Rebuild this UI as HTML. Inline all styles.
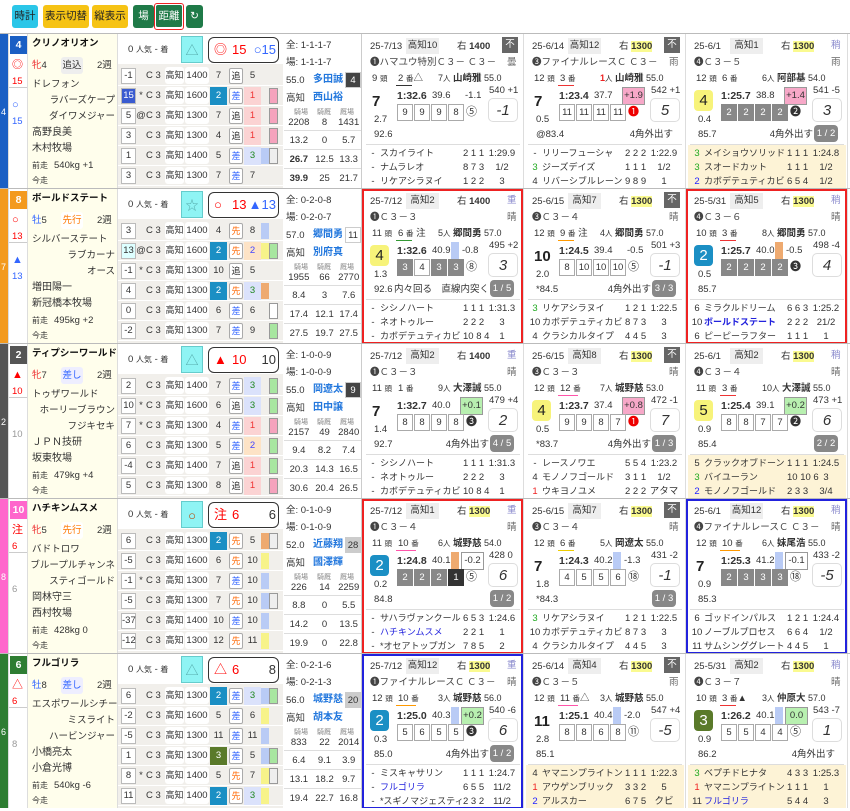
<!DOCTYPE html><html><head><meta charset="utf-8"><style>
*{box-sizing:border-box;margin:0;padding:0}
body{width:850px;height:811px;overflow:hidden;background:#fff;font-family:"Liberation Sans","Noto Sans CJK JP",sans-serif;font-size:9.5px;color:#333;position:relative}
i{position:absolute;font-style:normal;white-space:nowrap;line-height:1;display:block}
b{font-weight:bold}
.btn{position:absolute;top:5px;height:23px;border-radius:3px;font-size:10.5px;line-height:23px;text-align:center;color:#222}
.row{position:absolute;left:0;width:850px;height:155px;border-top:1px solid #bbb;overflow:hidden}
.col{position:absolute;top:0;height:155px;overflow:hidden}
.strip{left:0;width:8px}
.strip i{left:1px;top:74px;color:#fff;font-size:9px}
.nb{left:8px;width:19px;border-left:1px solid #ddd}
.nb .no{left:1px;top:2px;width:17px;height:18px;line-height:18px;text-align:center;color:#fff;font-weight:bold;font-size:10.5px}
.nb .m1{left:3px;top:26px;font-size:11px}.nb .m2{left:3px;top:43px}
.nb .ln{left:0;top:53px;width:18px;height:1px;background:#ccc}
.nb .m3{left:3px;top:66px;font-size:11px}.nb .m4{left:3px;top:83px}
.nb .gy{left:3px;top:86px;color:#999}
.nm{left:27px;width:91px;background:#fffeec;border-left:1px solid #ddd;border-right:1px solid #ddd}
.n1{left:4px;top:5px;font-weight:bold;font-size:9.5px;color:#111}
.n2{left:4px;top:27px}.n3{left:33px;top:23px;width:22px;height:17px;line-height:17px;text-align:center;border-radius:3px}
.n4{left:69px;top:27px}.n5{left:4px;top:46px}.n6{right:2px;top:62px}.n7{right:2px;top:78px}
.n8{left:4px;top:94px;font-size:10px}.n9{left:4px;top:110px;font-size:10px}
.n10{left:4px;top:128px;font-size:8px}.n11{left:26px;top:127px}.n12{left:4px;top:143px;font-size:8px}
.fm{left:118px;width:165px;background:#f1efeb}
.fm .hd{left:0;top:0;width:165px;height:30px;background:#fff}
.fm .h1{left:10px;top:11px}
.fm .cb{left:63px;top:2px;width:22px;height:27px;line-height:27px;text-align:center;background:#8ff4f4;border:1px solid #6cc;font-size:13px}
.fm .ov{left:90px;top:3px;width:71px;height:26px;border:1.5px solid #333;border-radius:6px;background:#fff}
.ov i{top:5px;font-size:13px}
.fr{position:absolute;left:0;width:165px;height:20px;display:flex;align-items:center;border-bottom:1px solid #fff;white-space:nowrap;overflow:hidden}
.fr span{display:block;flex:none}
.fr .d{margin-left:3px;width:15px;height:16px;border:1px solid #bbb;background:#fff;font-size:9.5px;text-align:center;line-height:14px}
.fr .p{width:10px;text-align:center}
.fr .c{width:19px}
.fr .v{width:19px;height:17px;background:#fff;border-radius:3px;text-align:center;line-height:17px;font-size:9px}
.fr .s{width:24px;margin-left:1px;height:17px;background:#fff;border-radius:3px;text-align:center;line-height:17px}
.fr .o{width:17px;margin-left:1px;height:18px;line-height:18px;text-align:center}
.fr .y{width:14px;height:16px;margin-left:2px;border:1px solid #aaa;border-radius:2px;background:#fff;text-align:center;line-height:14px;font-size:9px}
.fr .k{width:17px;margin-left:1px;height:18px;line-height:18px;text-align:center}
.fr .b1{width:8px;height:16px}.fr .b2{width:9px;height:16px;border:1px solid #999}
.bl{background:#1b8fc4;color:#fff}.ol{background:#5a7a2a;color:#fff}
.tu{background:#e2e2e2}.sa{color:#36f}.se{color:#f60}
.r1{background:#fbd3d3;color:#e33}.r2{background:#fde3c6;color:#44f}.r3{background:#dbe2fb;color:#282}
.cpk{background:#f5a3bd}.cgr{background:#a8e6a0}.cbl{background:#b9cbf5}.cye{background:#f7f38a}.cor{background:#eeaa70}.cwh{background:#fff}.cgy{background:#eee}
.sk{left:283px;width:79px;border-right:1px solid #ccc}
.s1{left:3px;top:7px}.s2{left:3px;top:24px}.s3{left:3px;top:42px}.s4{left:30px;top:41px;color:#27d;font-weight:bold;font-size:10px}
.s5{left:62px;top:38px;width:16px;height:16px;line-height:16px;text-align:center;border:1px solid #ccc}
.s6{left:3px;top:60px}.s7{left:30px;top:59px;color:#27d;font-weight:bold;font-size:10px}
.lb{top:75px;font-size:7px;color:#888}
.sr{position:absolute;left:1px;width:78px;display:flex;height:19px;line-height:19px}
.sr span{display:block;text-align:center}
.sr span:nth-child(1){width:30px}.sr span:nth-child(2){width:22px}.sr span:nth-child(3){width:27px}
.sr.t{border-top:1px solid #ddd}
.rc{position:absolute;top:0;width:162px;height:155px;border-right:1px solid #ddd;background:#fff;overflow:hidden}
.rc.R::after,.rc.U::after{content:'';position:absolute;left:0;top:0;right:0;bottom:0;border:2px solid #e22}
.rc.U::after{border-color:#22d}
.t1{left:8px;top:8px}
.t2{left:44px;top:4px;width:33px;height:16px;line-height:16px;text-align:center;background:#eee}
.t3{left:95px;top:8px}.t3 b{font-size:9.5px}.t3 b.h{background:#fafa90}
.t4{left:145px;top:7px;color:#88c}
.t4.f{left:140px;top:3px;width:16px;height:16px;line-height:16px;text-align:center;background:#666;color:#fff}
.t5{left:8px;top:24px;font-size:9.5px;color:#444}.t6{left:145px;top:24px;color:#666}
.t7{left:10px;top:40px}.t8{left:36px;top:40px}.t9{left:34px;top:51px;width:16px;height:1px}
.t10{left:76px;top:40px;font-size:9px}.t10 b{font-size:9.5px}
.rc small{font-size:7.5px}
.rk{left:10px;top:60px;font-size:15px;font-weight:bold;color:#222}
.rk.c{left:8px;top:56px;width:19px;height:21px;line-height:21px;text-align:center;border-radius:4px;color:#fff;font-weight:normal}
.rk.yl{background:#f7f37a;color:#222}
.tm{left:35px;top:57px;font-weight:bold;font-size:10.5px}.f3{left:70px;top:57px}
.db{left:89px;top:53px;width:8px;height:18px}
.df{left:103px;top:57px}
.df.x{left:98px;top:53px;width:23px;height:18px;line-height:16px;text-align:center;border:1px solid #999}
.db+.df{left:100px}.db+.df.x{left:99px}
.pk{background:#f7a8c8}.gn{background:#b8f0b0}.wh{background:#fff}
.wt{left:127px;top:52px}
.sc{left:126px;top:64px;width:30px;height:24px;line-height:24px;text-align:center;border:1px solid #ddd;border-radius:5px;font-style:italic;font-size:15px;background:#fff}
.od{left:12px;top:81px}
.cn{left:35px;top:70px;display:flex}
.cn u{display:block;width:16px;height:17px;line-height:15px;text-align:center;margin-right:1px;background:#fff;border:1px solid #aaa;text-decoration:none}
.cn u.g{background:#888;color:#fff;border-color:#888}.cn u.k{background:#333;color:#fff;border-color:#333}
.cm{left:104px;top:73px;font-size:11px}
.ix{left:12px;top:96px}.cmt{right:34px;top:96px}.cmt.n{right:12px}
.bg{left:128px;top:91px;width:24px;height:17px;line-height:17px;text-align:center;background:#888;color:#fff;border-radius:4px}
.sep{left:4px;top:110px;width:154px;height:1px;background:#ddd}
.fin{position:absolute;left:2px;top:111px;width:158px;height:44px}
.fin.y{background:#fdf3d6}
.fl{position:absolute;left:0;width:158px;height:14px}
.l1{top:4px}.l2{top:18px}.l3{top:32px}
.fn{left:2px;width:14px;text-align:center}.fa{left:16px;font-size:9px}.fp{left:99px}.ft{left:123px;width:30px;text-align:center}
.gc{color:#2a2}.rc2{color:#e22}.bc{color:#22f}.nmb{color:#22d}
</style></head><body>
<div class="btn" style="left:12px;width:26px;background:#2bc6e8">時計</div>
<div class="btn" style="left:43px;width:46px;background:#f6c314">表示切替</div>
<div class="btn" style="left:92px;width:36px;background:#f6c314">縦表示</div>
<div class="btn" style="left:133px;width:21px;background:#1f7a48;color:#fff">場</div>
<div class="btn" style="left:154px;top:3px;height:27px;width:30px;border:1.5px solid #e22;background:#fff;padding:1px"><div style="background:#1f7a48;color:#fff;height:22px;line-height:22px;border-radius:2px">距離</div></div>
<div class="btn" style="left:186px;width:17px;background:#1f7a48;color:#fff">↻</div>

<!-- ROW 1 -->
<div class="row" style="top:33px">
<div class="col strip" style="background:#1a5fc4"><i>4</i></div>
<div class="col nb"><i class="no" style="background:#1a5fc4">4</i><i class="m1" style="color:red">◎</i><i class="m2" style="color:red">15</i><i class="ln"></i><i class="m3" style="color:#36f">○</i><i class="m4" style="color:#36f">15</i></div>
<div class="col nm"><i class="n1">クリノオリオン</i><i class="n2"><span style="color:#e33">牝</span>4</i><i class="n3" style="background:#eee">追込</i><i class="n4">2週</i><i class="n5">ドレフォン</i><i class="n6">ラバーズケープ</i><i class="n7">ダイワメジャー</i><i class="n8">高野良美</i><i class="n9">木村牧場</i><i class="n10">前走</i><i class="n11">540kg +1</i><i class="n12">今走</i></div>
<div class="col fm"><i class="hd"></i><i class="h1">0 <small style="font-size:8px">人気</small> - <small style="font-size:8px">着</small></i><i class="cb" style="color:#5aa">△</i><i class="ov"><i style="left:5px;color:red">◎</i><i style="left:23px;color:red">15</i><i style="right:2px;color:#36f">○15</i></i>
<div class="fr" style="top:32px"><span class="d">-1</span><span class="p"></span><span class="c">C 3</span><span class="v">高知</span><span class="s">1400</span><span class="o">7</span><span class="y tu">追</span><span class="k">5</span><span class="b1"></span></div>
<div class="fr" style="top:52px"><span class="d" style="background:#3a5bd0;color:#fff">15</span><span class="p">*</span><span class="c">C 3</span><span class="v">高知</span><span class="s">1600</span><span class="o bl">2</span><span class="y sa">差</span><span class="k r1">1</span><span class="b1"></span><span class="b2 cpk"></span></div>
<div class="fr" style="top:72px"><span class="d">5</span><span class="p">@</span><span class="c">C 3</span><span class="v">高知</span><span class="s">1300</span><span class="o">7</span><span class="y tu">追</span><span class="k r1">1</span><span class="b1"></span><span class="b2 cpk"></span></div>
<div class="fr" style="top:92px"><span class="d">3</span><span class="p"></span><span class="c">C 3</span><span class="v">高知</span><span class="s">1300</span><span class="o">4</span><span class="y tu">追</span><span class="k r1">1</span><span class="b1"></span><span class="b2 cpk"></span></div>
<div class="fr" style="top:112px"><span class="d">1</span><span class="p"></span><span class="c">C 3</span><span class="v">高知</span><span class="s">1400</span><span class="o">5</span><span class="y sa">差</span><span class="k r3">3</span><span class="b1 cbl"></span><span class="b2 cgy"></span></div>
<div class="fr" style="top:132px"><span class="d">3</span><span class="p"></span><span class="c">C 3</span><span class="v">高知</span><span class="s">1300</span><span class="o">7</span><span class="y sa">差</span><span class="k">7</span><span class="b1"></span></div>
</div>
<div class="col sk"><i class="s1">全: 1-1-1-7</i><i class="s2">場: 1-1-1-7</i><i class="s3">55.0</i><i class="s4">多田誠</i><i class="s5" style="background:#444;color:#fff">4</i><i class="s6">高知</i><i class="s7">西山裕</i><i class="lb" style="left:11px">騎場</i><i class="lb" style="left:34px">騎厩</i><i class="lb" style="left:57px">厩場</i>
<div class="sr" style="top:79px"><span>2208</span><span>8</span><span>1431</span></div><div class="sr t" style="top:96px"><span>13.2</span><span>0</span><span>5.7</span></div><div class="sr t" style="top:115px"><span><b>26.7</b></span><span>12.5</span><span>13.3</span></div><div class="sr t" style="top:134px"><span><b>39.9</b></span><span>25</span><span>21.7</span></div></div>
<div class="rc" style="left:362px"><i class="t1">25-7/13</i><i class="t2">高知10</i><i class="t3">右 <b>1400</b></i><i class="t4 f">不</i><i class="t5">❶ハマユウ特別Ｃ３－ Ｃ３－</i><i class="t6">曇</i><i class="t7">9 <small>頭</small></i><i class="t8">2 <small>番</small>△</i><i class="t9" style="background:#333"></i><i class="t10">7<small>人</small> <b>山崎雅</b> 55.0</i><i class="rk">7</i><i class="tm">1:32.6</i><i class="f3">39.6</i><i class="df">-1.1</i><i class="wt">540 +1</i><i class="sc">-1</i><i class="od">2.7</i><i class="cn"><u>9</u><u>9</u><u>9</u><u>8</u></i><i class="cm">⑤</i><i class="ix">92.6</i><i class="sep"></i>
<div class="fin"><div class="fl l1"><i class="fn">-</i><i class="fa">スカイライト</i><i class="fp">2 1 1</i><i class="ft">1:29.9</i></div><div class="fl l2"><i class="fn">-</i><i class="fa">ナムラレオ</i><i class="fp">8 7 3</i><i class="ft">1/2</i></div><div class="fl l3"><i class="fn">-</i><i class="fa">リケアシラヌイ</i><i class="fp">1 2 2</i><i class="ft">3</i></div></div></div>
<div class="rc" style="left:524px"><i class="t1">25-6/14</i><i class="t2">高知12</i><i class="t3">右 <b class="h">1300</b></i><i class="t4 f">不</i><i class="t5">❸ファイナルレースＣ Ｃ３－</i><i class="t6">雨</i><i class="t7">12 <small>頭</small></i><i class="t8">3 <small>番</small></i><i class="t9" style="background:#e33"></i><i class="t10"><span style="color:#e22;font-weight:bold">1</span><small>人</small> <b>山崎雅</b> 55.0</i><i class="rk">7</i><i class="tm">1:23.4</i><i class="f3">37.7</i><i class="df x pk">+1.9</i><i class="wt">542 +1</i><i class="sc">5</i><i class="od">0.5</i><i class="cn"><u>11</u><u>11</u><u>11</u><u>11</u></i><i class="cm" style="color:#e00">❶</i><i class="ix">@83.4</i><i class="cmt n">4角外出す</i><i class="sep"></i>
<div class="fin"><div class="fl l1"><i class="fn">-</i><i class="fa">リリーフューシャ</i><i class="fp">2 2 2</i><i class="ft">1:22.9</i></div><div class="fl l2"><i class="fn gc">3</i><i class="fa">ジーズデイズ</i><i class="fp">1 1 1</i><i class="ft">1/2</i></div><div class="fl l3"><i class="fn">4</i><i class="fa">リバーシブルレーン</i><i class="fp">9 8 9</i><i class="ft">1</i></div></div></div>
<div class="rc" style="left:686px"><i class="t1">25-6/1</i><i class="t2">高知1</i><i class="t3">右 <b class="h">1300</b></i><i class="t4">稍</i><i class="t5">❹Ｃ３－５</i><i class="t6">雨</i><i class="t7">12 <small>頭</small></i><i class="t8">6 <small>番</small></i><i class="t10">6<small>人</small> <b>阿部基</b> 54.0</i><i class="rk c yl">4</i><i class="tm">1:25.7</i><i class="f3">38.8</i><i class="df x pk">+1.4</i><i class="wt">541 -5</i><i class="sc">3</i><i class="od">0.4</i><i class="cn"><u class="g">2</u><u class="g">2</u><u class="g">2</u><u class="g">2</u></i><i class="cm">❷</i><i class="ix">85.7</i><i class="cmt">4角外出す</i><i class="bg">1 / 2</i><i class="sep"></i>
<div class="fin y"><div class="fl l1"><i class="fn gc">3</i><i class="fa">メイショウソリッド</i><i class="fp">1 1 1</i><i class="ft">1:24.8</i></div><div class="fl l2"><i class="fn gc">3</i><i class="fa">スオードカット</i><i class="fp">1 1 1</i><i class="ft">1/2</i></div><div class="fl l3"><i class="fn bc">2</i><i class="fa">カボデテュティカビ</i><i class="fp">6 5 4</i><i class="ft">1/2</i></div></div></div>
</div>

<!-- ROW 2 -->
<div class="row" style="top:188px">
<div class="col strip" style="background:#f39a1e"><i>7</i></div>
<div class="col nb"><i class="no" style="background:#f39a1e">8</i><i class="m1" style="color:red">○</i><i class="m2" style="color:red">13</i><i class="ln"></i><i class="m3" style="color:#36f">▲</i><i class="m4" style="color:#36f">13</i></div>
<div class="col nm"><i class="n1">ボールドステート</i><i class="n2"><span style="color:#36f">牡</span>5</i><i class="n3" style="color:#f70;background:#fff">先行</i><i class="n4">2週</i><i class="n5">シルバーステート</i><i class="n6">ラブカーナ</i><i class="n7">オース</i><i class="n8">増田陽一</i><i class="n9">新冠橋本牧場</i><i class="n10">前走</i><i class="n11">495kg +2</i><i class="n12">今走</i></div>
<div class="col fm"><i class="hd"></i><i class="h1">0 <small style="font-size:8px">人気</small> - <small style="font-size:8px">着</small></i><i class="cb" style="color:#5aa">☆</i><i class="ov"><i style="left:5px;color:red">○</i><i style="left:23px;color:red">13</i><i style="right:2px;color:#36f">▲13</i></i>
<div class="fr" style="top:32px"><span class="d">3</span><span class="p"></span><span class="c">C 3</span><span class="v">高知</span><span class="s">1400</span><span class="o">4</span><span class="y se">先</span><span class="k">8</span><span class="b1 cbl"></span></div>
<div class="fr" style="top:52px"><span class="d" style="background:#dff">13</span><span class="p">@</span><span class="c">C 3</span><span class="v">高知</span><span class="s">1600</span><span class="o bl">2</span><span class="y se">先</span><span class="k r2">2</span><span class="b1 cye"></span><span class="b2 cgr"></span></div>
<div class="fr" style="top:72px"><span class="d">-1</span><span class="p">*</span><span class="c">C 3</span><span class="v">高知</span><span class="s">1300</span><span class="o">10</span><span class="y tu">追</span><span class="k">5</span><span class="b1"></span></div>
<div class="fr" style="top:92px"><span class="d">4</span><span class="p"></span><span class="c">C 3</span><span class="v">高知</span><span class="s">1300</span><span class="o bl">2</span><span class="y se">先</span><span class="k r3">3</span><span class="b1 cor"></span></div>
<div class="fr" style="top:112px"><span class="d">0</span><span class="p"></span><span class="c">C 3</span><span class="v">高知</span><span class="s">1400</span><span class="o">6</span><span class="y sa">差</span><span class="k">6</span><span class="b1"></span><span class="b2 cwh"></span></div>
<div class="fr" style="top:132px"><span class="d">-2</span><span class="p"></span><span class="c">C 3</span><span class="v">高知</span><span class="s">1300</span><span class="o">7</span><span class="y sa">差</span><span class="k">9</span><span class="b1"></span><span class="b2 cgr"></span></div>
</div>
<div class="col sk"><i class="s1">全: 0-2-0-8</i><i class="s2">場: 0-2-0-7</i><i class="s3">57.0</i><i class="s4">郷間勇</i><i class="s5" style="background:#fff">11</i><i class="s6">高知</i><i class="s7">別府真</i><i class="lb" style="left:11px">騎場</i><i class="lb" style="left:34px">騎厩</i><i class="lb" style="left:57px">厩場</i>
<div class="sr" style="top:79px"><span>1955</span><span>66</span><span>2770</span></div><div class="sr t" style="top:96px"><span>8.4</span><span>3</span><span>7.6</span></div><div class="sr t" style="top:115px"><span>17.4</span><span>12.1</span><span>17.4</span></div><div class="sr t" style="top:134px"><span>27.5</span><span>19.7</span><span>27.5</span></div></div>
<div class="rc R" style="left:362px"><i class="t1">25-7/12</i><i class="t2">高知2</i><i class="t3">右 <b>1400</b></i><i class="t4">重</i><i class="t5">❶Ｃ３－３</i><i class="t6">晴</i><i class="t7">11 <small>頭</small></i><i class="t8">6 <small>番</small> 注</i><i class="t9" style="background:#393"></i><i class="t10">5<small>人</small> <b>郷間勇</b> 57.0</i><i class="rk c yl">4</i><i class="tm">1:32.6</i><i class="f3">40.9</i><i class="db cbl"></i><i class="df">-0.8</i><i class="wt">495 +2</i><i class="sc">3</i><i class="od">1.3</i><i class="cn"><u class="g">3</u><u>4</u><u class="g">3</u><u class="g">3</u></i><i class="cm">⑧</i><i class="ix">92.6</i><i class="cmt">内々回る　直線内突く</i><i class="bg">1 / 5</i><i class="sep"></i>
<div class="fin"><div class="fl l1"><i class="fn">-</i><i class="fa">シシノハート</i><i class="fp">1 1 1</i><i class="ft">1:31.3</i></div><div class="fl l2"><i class="fn">-</i><i class="fa">ネオトゥルー</i><i class="fp">2 2 2</i><i class="ft">3</i></div><div class="fl l3"><i class="fn">-</i><i class="fa">カボデテュティカビ</i><i class="fp">10 8 4</i><i class="ft">1</i></div></div></div>
<div class="rc" style="left:524px"><i class="t1">25-6/15</i><i class="t2">高知7</i><i class="t3">右 <b class="h">1300</b></i><i class="t4 f">不</i><i class="t5">❸Ｃ３－４</i><i class="t6">晴</i><i class="t7">12 <small>頭</small></i><i class="t8">9 <small>番</small> 注</i><i class="t9" style="background:#f90"></i><i class="t10">4<small>人</small> <b>郷間勇</b> 57.0</i><i class="rk">10</i><i class="tm">1:24.5</i><i class="f3">39.4</i><i class="df">-0.5</i><i class="wt">501 +3</i><i class="sc">-1</i><i class="od">2.0</i><i class="cn"><u>8</u><u>10</u><u>10</u><u>10</u></i><i class="cm">⑤</i><i class="ix">*84.5</i><i class="cmt">4角外出す</i><i class="bg">3 / 3</i><i class="sep"></i>
<div class="fin"><div class="fl l1"><i class="fn gc">3</i><i class="fa">リケアシラヌイ</i><i class="fp">1 2 1</i><i class="ft">1:22.5</i></div><div class="fl l2"><i class="fn">10</i><i class="fa">カボデテュティカビ</i><i class="fp">8 7 3</i><i class="ft">3</i></div><div class="fl l3"><i class="fn">4</i><i class="fa">クラシカルタイプ</i><i class="fp">4 4 5</i><i class="ft">3</i></div></div></div>
<div class="rc R" style="left:686px"><i class="t1">25-5/31</i><i class="t2">高知5</i><i class="t3">右 <b class="h">1300</b></i><i class="t4">稍</i><i class="t5">❹Ｃ３－６</i><i class="t6">晴</i><i class="t7">10 <small>頭</small></i><i class="t8">3 <small>番</small></i><i class="t9" style="background:#e33"></i><i class="t10">8<small>人</small> <b>郷間勇</b> 57.0</i><i class="rk c" style="background:#1b8fc4">2</i><i class="tm">1:25.7</i><i class="f3">40.0</i><i class="db cor"></i><i class="df">-0.5</i><i class="wt">498 -4</i><i class="sc">4</i><i class="od">0.5</i><i class="cn"><u class="g">2</u><u class="g">2</u><u class="g">2</u><u class="g">2</u></i><i class="cm">❸</i><i class="ix">85.7</i><i class="sep"></i>
<div class="fin"><div class="fl l1"><i class="fn">6</i><i class="fa">ミラクルドリーム</i><i class="fp">6 6 3</i><i class="ft">1:25.2</i></div><div class="fl l2"><i class="fn">10</i><i class="fa nmb"><b>ボールドステート</b></i><i class="fp">2 2 2</i><i class="ft">21/2</i></div><div class="fl l3"><i class="fn">6</i><i class="fa">ピーピーラフター</i><i class="fp">1 1 1</i><i class="ft">1</i></div></div></div>
</div>

<!-- ROW 3 -->
<div class="row" style="top:343px">
<div class="col strip" style="background:#555"><i>2</i></div>
<div class="col nb"><i class="no" style="background:#555">2</i><i class="m1" style="color:red">▲</i><i class="m2" style="color:red">10</i><i class="ln"></i><i class="gy">10</i></div>
<div class="col nm"><i class="n1">ティプシーワールド</i><i class="n2"><span style="color:#e33">牝</span>7</i><i class="n3" style="color:#36f;background:#eef">差し</i><i class="n4">2週</i><i class="n5">トゥザワールド</i><i class="n6">ホーリーブラウン</i><i class="n7">フジキセキ</i><i class="n8">ＪＰＮ技研</i><i class="n9">坂東牧場</i><i class="n10">前走</i><i class="n11">479kg +4</i><i class="n12">今走</i></div>
<div class="col fm"><i class="hd"></i><i class="h1">0 <small style="font-size:8px">人気</small> - <small style="font-size:8px">着</small></i><i class="cb" style="color:#5aa">△</i><i class="ov"><i style="left:5px;color:red">▲</i><i style="left:23px;color:red">10</i><i style="right:2px;color:#333">10</i></i>
<div class="fr" style="top:32px"><span class="d">2</span><span class="p"></span><span class="c">C 3</span><span class="v">高知</span><span class="s">1400</span><span class="o">7</span><span class="y sa">差</span><span class="k r3">3</span><span class="b1"></span><span class="b2 cgr"></span></div>
<div class="fr" style="top:52px"><span class="d">10</span><span class="p">*</span><span class="c">C 3</span><span class="v">高知</span><span class="s">1600</span><span class="o">6</span><span class="y tu">追</span><span class="k r3">3</span><span class="b1"></span><span class="b2 cgr"></span></div>
<div class="fr" style="top:72px"><span class="d">7</span><span class="p">*</span><span class="c">C 3</span><span class="v">高知</span><span class="s">1300</span><span class="o">4</span><span class="y sa">差</span><span class="k r1">1</span><span class="b1"></span><span class="b2 cpk"></span></div>
<div class="fr" style="top:92px"><span class="d">6</span><span class="p"></span><span class="c">C 3</span><span class="v">高知</span><span class="s">1300</span><span class="o">5</span><span class="y sa">差</span><span class="k r2">2</span><span class="b1"></span><span class="b2 cgr"></span></div>
<div class="fr" style="top:112px"><span class="d">-4</span><span class="p"></span><span class="c">C 3</span><span class="v">高知</span><span class="s">1400</span><span class="o">7</span><span class="y tu">追</span><span class="k r1">1</span><span class="b1"></span><span class="b2 cgr"></span></div>
<div class="fr" style="top:132px"><span class="d">5</span><span class="p"></span><span class="c">C 3</span><span class="v">高知</span><span class="s">1300</span><span class="o">8</span><span class="y tu">追</span><span class="k r1">1</span><span class="b1"></span><span class="b2 cpk"></span></div>
</div>
<div class="col sk"><i class="s1">全: 1-0-0-9</i><i class="s2">場: 1-0-0-9</i><i class="s3">55.0</i><i class="s4">岡遼太</i><i class="s5" style="background:#444;color:#fff">9</i><i class="s6">高知</i><i class="s7">田中譲</i><i class="lb" style="left:11px">騎場</i><i class="lb" style="left:34px">騎厩</i><i class="lb" style="left:57px">厩場</i>
<div class="sr" style="top:79px"><span>2157</span><span>49</span><span>2840</span></div><div class="sr t" style="top:96px"><span>9.4</span><span>8.2</span><span>7.4</span></div><div class="sr t" style="top:115px"><span>20.3</span><span>14.3</span><span>16.5</span></div><div class="sr t" style="top:134px"><span>30.6</span><span>20.4</span><span>26.5</span></div></div>
<div class="rc" style="left:362px"><i class="t1">25-7/12</i><i class="t2">高知2</i><i class="t3">右 <b>1400</b></i><i class="t4">重</i><i class="t5">❶Ｃ３－３</i><i class="t6">晴</i><i class="t7">11 <small>頭</small></i><i class="t8">1 <small>番</small></i><i class="t10">9<small>人</small> <b>大澤誠</b> 55.0</i><i class="rk">7</i><i class="tm">1:32.7</i><i class="f3">40.0</i><i class="df x gn">+0.1</i><i class="wt">479 +4</i><i class="sc">2</i><i class="od">1.4</i><i class="cn"><u>8</u><u>8</u><u>9</u><u>8</u></i><i class="cm">❸</i><i class="ix">92.7</i><i class="cmt">4角外出す</i><i class="bg">4 / 5</i><i class="sep"></i>
<div class="fin"><div class="fl l1"><i class="fn">-</i><i class="fa">シシノハート</i><i class="fp">1 1 1</i><i class="ft">1:31.3</i></div><div class="fl l2"><i class="fn">-</i><i class="fa">ネオトゥルー</i><i class="fp">2 2 2</i><i class="ft">3</i></div><div class="fl l3"><i class="fn">-</i><i class="fa">カボデテュティカビ</i><i class="fp">10 8 4</i><i class="ft">1</i></div></div></div>
<div class="rc" style="left:524px"><i class="t1">25-6/15</i><i class="t2">高知8</i><i class="t3">右 <b class="h">1300</b></i><i class="t4 f">不</i><i class="t5">❸Ｃ３－３</i><i class="t6">晴</i><i class="t7">12 <small>頭</small></i><i class="t8">12 <small>番</small></i><i class="t9" style="background:#f5a;width:20px"></i><i class="t10">7<small>人</small> <b>城野慈</b> 53.0</i><i class="rk c yl">4</i><i class="tm">1:23.7</i><i class="f3">37.4</i><i class="df x pk">+0.8</i><i class="wt">472 -1</i><i class="sc">7</i><i class="od">0.5</i><i class="cn"><u>9</u><u>9</u><u>8</u><u>7</u></i><i class="cm" style="color:#e00">❶</i><i class="ix">*83.7</i><i class="cmt">4角外出す</i><i class="bg">1 / 3</i><i class="sep"></i>
<div class="fin"><div class="fl l1"><i class="fn">-</i><i class="fa">レースノワエ</i><i class="fp">5 5 4</i><i class="ft">1:23.2</i></div><div class="fl l2"><i class="fn">4</i><i class="fa">モノノフゴールド</i><i class="fp">3 1 1</i><i class="ft">1/2</i></div><div class="fl l3"><i class="fn rc2">1</i><i class="fa">ウキヨノユメ</i><i class="fp">2 2 2</i><i class="ft">アタマ</i></div></div></div>
<div class="rc" style="left:686px"><i class="t1">25-6/1</i><i class="t2">高知2</i><i class="t3">右 <b class="h">1300</b></i><i class="t4">稍</i><i class="t5">❹Ｃ３－４</i><i class="t6">晴</i><i class="t7">11 <small>頭</small></i><i class="t8">3 <small>番</small></i><i class="t9" style="background:#e33"></i><i class="t10">10<small>人</small> <b>大澤誠</b> 55.0</i><i class="rk c yl">5</i><i class="tm">1:25.4</i><i class="f3">39.1</i><i class="df x gn">+0.2</i><i class="wt">473 +1</i><i class="sc">6</i><i class="od">0.9</i><i class="cn"><u>8</u><u>8</u><u>7</u><u>7</u></i><i class="cm">❷</i><i class="ix">85.4</i><i class="bg">2 / 2</i><i class="sep"></i>
<div class="fin y"><div class="fl l1"><i class="fn">5</i><i class="fa">クラックオブドーン</i><i class="fp">1 1 1</i><i class="ft">1:24.5</i></div><div class="fl l2"><i class="fn gc">3</i><i class="fa">バイユーラン</i><i class="fp">10 10 6</i><i class="ft">3</i></div><div class="fl l3"><i class="fn bc">2</i><i class="fa">モノノフゴールド</i><i class="fp">2 3 3</i><i class="ft">3/4</i></div></div></div>
</div>

<!-- ROW 4 -->
<div class="row" style="top:498px">
<div class="col strip" style="background:#f6c"><i>8</i></div>
<div class="col nb"><i class="no" style="background:#f6c">10</i><i class="m1" style="color:red">注</i><i class="m2" style="color:red">6</i><i class="ln"></i><i class="gy">6</i></div>
<div class="col nm"><i class="n1">ハチキンムスメ</i><i class="n2"><span style="color:#e33">牝</span>5</i><i class="n3" style="color:#f70;background:#fff">先行</i><i class="n4">2週</i><i class="n5">バドトロワ</i><i class="n6">ブループルチャンネ</i><i class="n7">スティゴールド</i><i class="n8">岡林守三</i><i class="n9">西村牧場</i><i class="n10">前走</i><i class="n11">428kg 0</i><i class="n12">今走</i></div>
<div class="col fm"><i class="hd"></i><i class="h1">0 <small style="font-size:8px">人気</small> - <small style="font-size:8px">着</small></i><i class="cb" style="color:#b40">○</i><i class="ov"><i style="left:5px;color:red">注</i><i style="left:23px;color:red">6</i><i style="right:2px;color:#333">6</i></i>
<div class="fr" style="top:32px"><span class="d">6</span><span class="p"></span><span class="c">C 3</span><span class="v">高知</span><span class="s">1300</span><span class="o bl">2</span><span class="y se">先</span><span class="k">5</span><span class="b1 cor"></span><span class="b2 cgy"></span></div>
<div class="fr" style="top:52px"><span class="d">-5</span><span class="p"></span><span class="c">C 3</span><span class="v">高知</span><span class="s">1600</span><span class="o">6</span><span class="y se">先</span><span class="k">10</span><span class="b1 cye"></span></div>
<div class="fr" style="top:72px"><span class="d">-1</span><span class="p">*</span><span class="c">C 3</span><span class="v">高知</span><span class="s">1300</span><span class="o">7</span><span class="y sa">差</span><span class="k">10</span><span class="b1 cbl"></span></div>
<div class="fr" style="top:92px"><span class="d">-5</span><span class="p"></span><span class="c">C 3</span><span class="v">高知</span><span class="s">1300</span><span class="o">7</span><span class="y se">先</span><span class="k">10</span><span class="b1 cbl"></span><span class="b2 cgy"></span></div>
<div class="fr" style="top:112px"><span class="d">-37</span><span class="p"></span><span class="c">C 3</span><span class="v">高知</span><span class="s">1400</span><span class="o">10</span><span class="y sa">差</span><span class="k">10</span><span class="b1 cbl"></span></div>
<div class="fr" style="top:132px"><span class="d">-12</span><span class="p"></span><span class="c">C 3</span><span class="v">高知</span><span class="s">1300</span><span class="o">12</span><span class="y se">先</span><span class="k">11</span><span class="b1 cye"></span></div>
</div>
<div class="col sk"><i class="s1">全: 0-1-0-9</i><i class="s2">場: 0-1-0-9</i><i class="s3">52.0</i><i class="s4">近藤翔</i><i class="s5" style="background:#ccc">28</i><i class="s6">高知</i><i class="s7">國澤輝</i><i class="lb" style="left:11px">騎場</i><i class="lb" style="left:34px">騎厩</i><i class="lb" style="left:57px">厩場</i>
<div class="sr" style="top:79px"><span>226</span><span>14</span><span>2259</span></div><div class="sr t" style="top:96px"><span>8.8</span><span>0</span><span>5.5</span></div><div class="sr t" style="top:115px"><span>14.2</span><span>0</span><span>13.5</span></div><div class="sr t" style="top:134px"><span>19.9</span><span>0</span><span>22.8</span></div></div>
<div class="rc R" style="left:362px"><i class="t1">25-7/12</i><i class="t2">高知1</i><i class="t3">右 <b class="h">1300</b></i><i class="t4">重</i><i class="t5">❶Ｃ３－４</i><i class="t6">晴</i><i class="t7">11 <small>頭</small></i><i class="t8">10 <small>番</small></i><i class="t9" style="background:#f5a;width:20px"></i><i class="t10">6<small>人</small> <b>城野慈</b> 54.0</i><i class="rk c" style="background:#1b8fc4">2</i><i class="tm">1:24.8</i><i class="f3">40.1</i><i class="db cor"></i><i class="df x wh">-0.2</i><i class="wt">428 0</i><i class="sc">6</i><i class="od">0.2</i><i class="cn"><u class="g">2</u><u class="g">2</u><u class="g">2</u><u class="k">1</u></i><i class="cm">⑤</i><i class="ix">84.8</i><i class="bg">1 / 2</i><i class="sep"></i>
<div class="fin"><div class="fl l1"><i class="fn">-</i><i class="fa">サハラヴァンクール</i><i class="fp">6 5 3</i><i class="ft">1:24.6</i></div><div class="fl l2"><i class="fn">-</i><i class="fa nmb">ハチキンムスメ</i><i class="fp">2 2 1</i><i class="ft">1</i></div><div class="fl l3"><i class="fn">-</i><i class="fa">*オセアトップガン</i><i class="fp">7 8 5</i><i class="ft">2</i></div></div></div>
<div class="rc" style="left:524px"><i class="t1">25-6/15</i><i class="t2">高知7</i><i class="t3">右 <b class="h">1300</b></i><i class="t4 f">不</i><i class="t5">❸Ｃ３－４</i><i class="t6">晴</i><i class="t7">12 <small>頭</small></i><i class="t8">6 <small>番</small></i><i class="t9" style="background:#ec0"></i><i class="t10">5<small>人</small> <b>岡遼太</b> 55.0</i><i class="rk">7</i><i class="tm">1:24.3</i><i class="f3">40.2</i><i class="db cbl"></i><i class="df">-1.3</i><i class="wt">431 -2</i><i class="sc">-1</i><i class="od">1.8</i><i class="cn"><u>4</u><u>5</u><u>5</u><u>6</u></i><i class="cm">⑱</i><i class="ix">*84.3</i><i class="bg">1 / 3</i><i class="sep"></i>
<div class="fin"><div class="fl l1"><i class="fn gc">3</i><i class="fa">リケアシラヌイ</i><i class="fp">1 2 1</i><i class="ft">1:22.5</i></div><div class="fl l2"><i class="fn">10</i><i class="fa">カボデテュティカビ</i><i class="fp">8 7 3</i><i class="ft">3</i></div><div class="fl l3"><i class="fn">4</i><i class="fa">クラシカルタイプ</i><i class="fp">4 4 5</i><i class="ft">3</i></div></div></div>
<div class="rc U" style="left:686px"><i class="t1">25-6/1</i><i class="t2">高知12</i><i class="t3">右 <b class="h">1300</b></i><i class="t4">稍</i><i class="t5">❹ファイナルレースＣ Ｃ３－</i><i class="t6">晴</i><i class="t7">12 <small>頭</small></i><i class="t8">10 <small>番</small></i><i class="t9" style="background:#f90;width:20px"></i><i class="t10">6<small>人</small> <b>妹尾浩</b> 55.0</i><i class="rk">7</i><i class="tm">1:25.3</i><i class="f3">41.2</i><i class="db cbl"></i><i class="df x wh">-0.1</i><i class="wt">433 -2</i><i class="sc">-5</i><i class="od">0.9</i><i class="cn"><u class="g">2</u><u class="g">3</u><u class="g">3</u><u class="g">3</u></i><i class="cm">⑱</i><i class="ix">85.3</i><i class="sep"></i>
<div class="fin"><div class="fl l1"><i class="fn">6</i><i class="fa">ゴッドインパルス</i><i class="fp">1 2 1</i><i class="ft">1:24.4</i></div><div class="fl l2"><i class="fn">10</i><i class="fa">ノーブルプロセス</i><i class="fp">6 6 4</i><i class="ft">1/2</i></div><div class="fl l3"><i class="fn">11</i><i class="fa">サムシンググレート</i><i class="fp">4 4 5</i><i class="ft">1</i></div></div></div>
</div>

<!-- ROW 5 -->
<div class="row" style="top:653px">
<div class="col strip" style="background:#2e7d32"><i>6</i></div>
<div class="col nb"><i class="no" style="background:#2e7d32">6</i><i class="m1" style="color:red">△</i><i class="m2" style="color:red">6</i><i class="ln"></i><i class="gy">8</i></div>
<div class="col nm"><i class="n1">フルゴリラ</i><i class="n2"><span style="color:#36f">牡</span>8</i><i class="n3" style="color:#36f;background:#eef">差し</i><i class="n4">2週</i><i class="n5">エスポワールシチー</i><i class="n6">ミスライト</i><i class="n7">ハービンジャー</i><i class="n8">小橋亮太</i><i class="n9">小倉光博</i><i class="n10">前走</i><i class="n11">540kg -6</i><i class="n12">今走</i></div>
<div class="col fm"><i class="hd"></i><i class="h1">0 <small style="font-size:8px">人気</small> - <small style="font-size:8px">着</small></i><i class="cb" style="color:#5aa">△</i><i class="ov"><i style="left:5px;color:red">△</i><i style="left:23px;color:red">6</i><i style="right:2px;color:#333">8</i></i>
<div class="fr" style="top:32px"><span class="d">6</span><span class="p"></span><span class="c">C 3</span><span class="v">高知</span><span class="s">1300</span><span class="o bl">2</span><span class="y sa">差</span><span class="k r3">3</span><span class="b1 cbl"></span><span class="b2 cgr"></span></div>
<div class="fr" style="top:52px"><span class="d">-2</span><span class="p"></span><span class="c">C 3</span><span class="v">高知</span><span class="s">1600</span><span class="o">5</span><span class="y sa">差</span><span class="k">6</span><span class="b1 cye"></span></div>
<div class="fr" style="top:72px"><span class="d">-5</span><span class="p"></span><span class="c">C 3</span><span class="v">高知</span><span class="s">1300</span><span class="o">11</span><span class="y sa">差</span><span class="k">11</span><span class="b1 cbl"></span></div>
<div class="fr" style="top:92px"><span class="d">1</span><span class="p"></span><span class="c">C 3</span><span class="v">高知</span><span class="s">1300</span><span class="o ol">3</span><span class="y sa">差</span><span class="k">5</span><span class="b1 cbl"></span><span class="b2 cgr"></span></div>
<div class="fr" style="top:112px"><span class="d">8</span><span class="p">*</span><span class="c">C 3</span><span class="v">高知</span><span class="s">1400</span><span class="o">5</span><span class="y se">先</span><span class="k">7</span><span class="b1 cye"></span><span class="b2 cgy"></span></div>
<div class="fr" style="top:132px"><span class="d">11</span><span class="p"></span><span class="c">C 3</span><span class="v">高知</span><span class="s">1400</span><span class="o bl">2</span><span class="y se">先</span><span class="k r3">3</span><span class="b1 cye"></span></div>
</div>
<div class="col sk"><i class="s1">全: 0-2-1-6</i><i class="s2">場: 0-2-1-3</i><i class="s3">56.0</i><i class="s4">城野慈</i><i class="s5" style="background:#ccc">20</i><i class="s6">高知</i><i class="s7">胡本友</i><i class="lb" style="left:11px">騎場</i><i class="lb" style="left:34px">騎厩</i><i class="lb" style="left:57px">厩場</i>
<div class="sr" style="top:79px"><span>833</span><span>22</span><span>2014</span></div><div class="sr t" style="top:96px"><span>6.4</span><span>9.1</span><span>3.9</span></div><div class="sr t" style="top:115px"><span>13.1</span><span>18.2</span><span>9.7</span></div><div class="sr t" style="top:134px"><span>19.4</span><span>22.7</span><span>16.8</span></div></div>
<div class="rc U" style="left:362px"><i class="t1">25-7/12</i><i class="t2">高知12</i><i class="t3">右 <b class="h">1300</b></i><i class="t4">重</i><i class="t5">❶ファイナルレースＣ Ｃ３－</i><i class="t6">晴</i><i class="t7">12 <small>頭</small></i><i class="t8">10 <small>番</small></i><i class="t9" style="background:#f90;width:20px"></i><i class="t10">3<small>人</small> <b>城野慈</b> 56.0</i><i class="rk c" style="background:#1b8fc4">2</i><i class="tm">1:25.0</i><i class="f3">40.3</i><i class="db cbl"></i><i class="df x gn">+0.2</i><i class="wt">540 -6</i><i class="sc">6</i><i class="od">0.3</i><i class="cn"><u>5</u><u>6</u><u>5</u><u>5</u></i><i class="cm">❸</i><i class="ix">85.0</i><i class="cmt">4角外出す</i><i class="bg">1 / 2</i><i class="sep"></i>
<div class="fin"><div class="fl l1"><i class="fn">-</i><i class="fa">ミスキャサリン</i><i class="fp">1 1 1</i><i class="ft">1:24.7</i></div><div class="fl l2"><i class="fn">-</i><i class="fa nmb">フルゴリラ</i><i class="fp">6 5 5</i><i class="ft">11/2</i></div><div class="fl l3"><i class="fn">-</i><i class="fa">*スギノマジェスティ</i><i class="fp">2 3 2</i><i class="ft">11/2</i></div></div></div>
<div class="rc" style="left:524px"><i class="t1">25-6/14</i><i class="t2">高知4</i><i class="t3">右 <b class="h">1300</b></i><i class="t4 f">不</i><i class="t5">❸Ｃ３－５</i><i class="t6">雨</i><i class="t7">12 <small>頭</small></i><i class="t8">11 <small>番</small>△</i><i class="t9" style="background:#f5a;width:20px"></i><i class="t10">3<small>人</small> <b>城野慈</b> 55.0</i><i class="rk">11</i><i class="tm">1:25.1</i><i class="f3">40.4</i><i class="db cbl"></i><i class="df">-2.0</i><i class="wt">547 +4</i><i class="sc">-5</i><i class="od">2.8</i><i class="cn"><u>8</u><u>8</u><u>6</u><u>8</u></i><i class="cm">⑪</i><i class="ix">85.1</i><i class="sep"></i>
<div class="fin y"><div class="fl l1"><i class="fn">4</i><i class="fa">ヤマニンプライトン</i><i class="fp">1 1 1</i><i class="ft">1:22.3</i></div><div class="fl l2"><i class="fn rc2">1</i><i class="fa">アウゲンブリック</i><i class="fp">3 3 2</i><i class="ft">5</i></div><div class="fl l3"><i class="fn bc">2</i><i class="fa">アルスカー</i><i class="fp">6 7 5</i><i class="ft">クビ</i></div></div></div>
<div class="rc" style="left:686px"><i class="t1">25-5/31</i><i class="t2">高知2</i><i class="t3">右 <b class="h">1300</b></i><i class="t4">稍</i><i class="t5">❹Ｃ３－７</i><i class="t6">晴</i><i class="t7">10 <small>頭</small></i><i class="t8">3 <small>番</small>▲</i><i class="t9" style="background:#e33"></i><i class="t10">3<small>人</small> <b>仲原大</b> 57.0</i><i class="rk c" style="background:#5a7a2a">3</i><i class="tm">1:26.2</i><i class="f3">40.1</i><i class="db cbl"></i><i class="df x gn">0.0</i><i class="wt">543 -7</i><i class="sc">1</i><i class="od">0.9</i><i class="cn"><u>5</u><u>5</u><u>4</u><u>4</u></i><i class="cm">⑤</i><i class="ix">86.2</i><i class="cmt n">4角外出す</i><i class="sep"></i>
<div class="fin y"><div class="fl l1"><i class="fn gc">3</i><i class="fa">ベプチドヒナタ</i><i class="fp">4 3 3</i><i class="ft">1:25.3</i></div><div class="fl l2"><i class="fn rc2">1</i><i class="fa">ヤマニンプライトン</i><i class="fp">1 1 1</i><i class="ft">1</i></div><div class="fl l3"><i class="fn">11</i><i class="fa nmb">フルゴリラ</i><i class="fp">5 4 4</i><i class="ft">3</i></div></div></div>
</div>
</body></html>
